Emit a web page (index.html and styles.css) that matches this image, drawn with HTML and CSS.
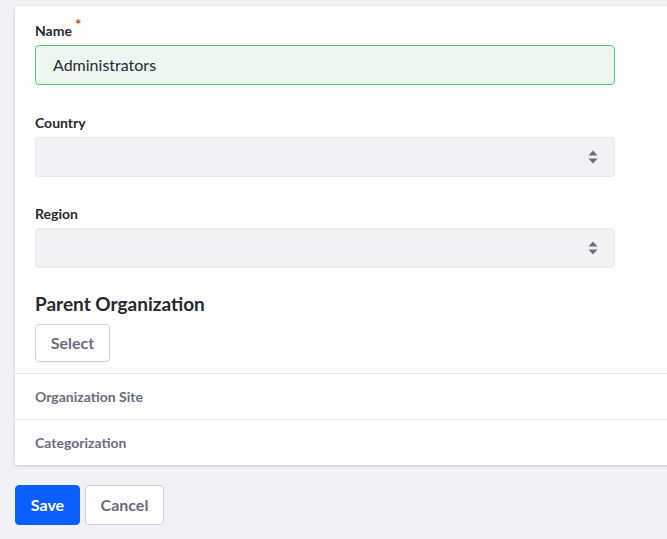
FILE: index.html
```html
<!DOCTYPE html>
<html lang="en">
<head>
<meta charset="utf-8">
<title>Organization</title>
<link rel="stylesheet" href="styles.css">
</head>
<body>
<div class="page">
  <div class="sheet">
    <div class="sheet-body">
      <div class="form-group">
        <label class="label">Name<span class="req">*</span></label>
        <div class="input input-valid">Administrators</div>
      </div>
      <div class="form-group form-group-tight">
        <label class="label">Country</label>
        <div class="input select">
          <svg class="arrows" width="10" height="14" viewBox="0 0 10 14"><path d="M5 0.5 L9.5 5.5 H0.5 Z" fill="#6b6c7e"/><path d="M5 13.5 L9.5 8.5 H0.5 Z" fill="#6b6c7e"/></svg>
        </div>
      </div>
      <div class="form-group form-group-last">
        <label class="label">Region</label>
        <div class="input select">
          <svg class="arrows" width="10" height="14" viewBox="0 0 10 14"><path d="M5 0.5 L9.5 5.5 H0.5 Z" fill="#6b6c7e"/><path d="M5 13.5 L9.5 8.5 H0.5 Z" fill="#6b6c7e"/></svg>
        </div>
      </div>
      <h3 class="subtitle">Parent Organization</h3>
      <button class="btn btn-secondary btn-select">Select</button>
    </div>
    <div class="panel">Organization Site</div>
    <div class="panel">Categorization</div>
  </div>
  <div class="actions">
    <button class="btn btn-primary">Save</button>
    <button class="btn btn-secondary">Cancel</button>
  </div>
</div>
</body>
</html>
```

FILE: styles.css
```css
html, body {
  margin: 0;
  padding: 0;
  overflow: hidden;
}
body {
  background: #f1f2f5;
  font-family: Lato, "Liberation Sans", sans-serif;
  color: #272833;
}
.page {
  padding: 6px 0 0 15px;
}
.sheet {
  background: #fff;
  width: 700px;
  box-shadow: 0 1px 3px rgba(0,0,0,0.18);
}
.sheet-body {
  padding: 15px 20px 11px 20px;
}
.form-group {
  margin-bottom: 28px;
}
.form-group-tight {
  margin-bottom: 27px;
}
.form-group-last {
  margin-bottom: 24px;
}
.label {
  display: block;
  font-size: 14px;
  font-weight: 700;
  line-height: 20px;
  margin-bottom: 4px;
}
.req {
  color: #b95000;
  font-size: 15px;
  font-weight: 700;
  line-height: 0;
  position: relative;
  top: -6px;
  margin-left: 3px;
}
.input {
  box-sizing: border-box;
  width: 580px;
  height: 40px;
  border-radius: 4px;
  background: #f1f2f5;
  border: 1px solid #e7e7ed;
  font-size: 16px;
  line-height: 38px;
  padding: 0 17px;
}
.input-valid {
  background: #edf7ef;
  border-color: #5aca75;
  color: #272833;
}
.select {
  display: flex;
  justify-content: flex-end;
  align-items: center;
  padding-right: 16px;
}
.arrows {
  display: block;
}
.subtitle {
  margin: 0 0 8px 0;
  font-size: 19px;
  line-height: 24px;
  font-weight: 700;
  color: #272833;
}
.btn {
  box-sizing: border-box;
  font-family: inherit;
  font-size: 16px;
  font-weight: 700;
  height: 40px;
  line-height: 20px;
  border-radius: 4px;
  padding: 0 15px;
  cursor: pointer;
}
.btn-secondary {
  background: #fff;
  border: 1px solid #cdced9;
  color: #6b6c7e;
}
.btn-primary {
  background: #0b5fff;
  border: 1px solid #0b5fff;
  color: #fff;
}
.btn-select {
  display: block;
  height: 38px;
  width: 75px;
  padding: 0;
}
.panel {
  border-top: 1px solid #e7e7ed;
  height: 45px;
  line-height: 45px;
  padding-left: 20px;
  font-size: 14px;
  font-weight: 700;
  color: #6b6c7e;
}
.actions {
  display: flex;
  gap: 5px;
  margin-top: 20px;
}
.actions .btn-primary { width: 65px; padding: 0; }
.actions .btn-secondary { width: 79px; padding: 0; }
```
